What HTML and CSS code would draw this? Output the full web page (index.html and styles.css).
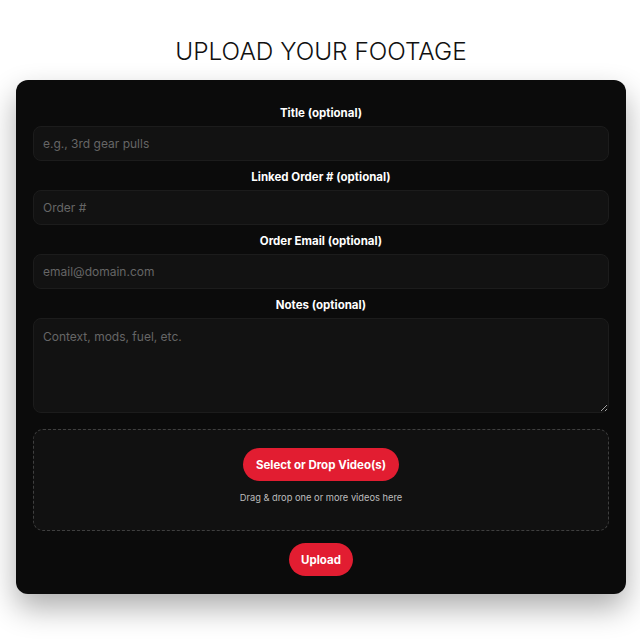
FILE: index.html
```html
<!DOCTYPE html>
<html>
<head>
<meta charset="utf-8">
<link rel="stylesheet" href="styles.css">
</head>
<body>
<main class="page">
  <h1 class="heading">UPLOAD YOUR FOOTAGE</h1>
  <form class="card">
    <div class="field">
      <label class="label">Title (optional)</label>
      <input class="input" type="text" placeholder="e.g., 3rd gear pulls">
    </div>
    <div class="field">
      <label class="label">Linked Order # (optional)</label>
      <input class="input" type="text" placeholder="Order #">
    </div>
    <div class="field">
      <label class="label">Order Email (optional)</label>
      <input class="input" type="text" placeholder="email@domain.com">
    </div>
    <div class="field">
      <label class="label">Notes (optional)</label>
      <textarea class="input textarea" placeholder="Context, mods, fuel, etc."></textarea>
    </div>
    <div class="dropzone">
      <button type="button" class="btn btn-select">Select or Drop Video(s)</button>
      <p class="hint">Drag &amp; drop one or more videos here</p>
    </div>
    <div class="actions">
      <button type="button" class="btn btn-upload">Upload</button>
    </div>
  </form>
</main>
</body>
</html>
```
FILE: styles.css
```css
* { box-sizing: border-box; }
html, body { margin: 0; padding: 0; background: #ffffff; }
body { font-family: Inter, "Noto Sans", sans-serif; }
.page {
  padding: 36px 14px 60px 16px;
  display: flex;
  flex-direction: column;
  align-items: stretch;
}
.heading {
  margin: 0 0 14px;
  text-align: center;
  font-weight: 300;
  font-size: 24.4px;
  line-height: 30px;
  letter-spacing: 0;
  color: #111;
}
.card {
  background: #0b0b0b;
  border-radius: 12px;
  padding: 25px 17px 18px;
  box-shadow: 0 14px 30px rgba(0,0,0,0.32);
  display: flex;
  flex-direction: column;
}
.field {
  display: flex;
  flex-direction: column;
  margin-bottom: 8px;
}
.label {
  text-align: center;
  color: #ffffff;
  font-weight: 700;
  font-size: 11.5px;
  line-height: 16px;
  margin-bottom: 5px;
}
.input {
  height: 35px;
  width: 100%;
  background: #121212;
  border: 1px solid #1c1c1c;
  border-radius: 8px;
  color: #ddd;
  font-family: Inter, sans-serif;
  font-size: 12px;
  padding: 0 9px;
  outline: none;
}
.input::placeholder { color: #666; }
.textarea {
  height: 95px;
  padding: 10px 9px;
  resize: vertical;
  line-height: 16px;
}
.dropzone {
  margin-top: 8px;
  height: 102px;
  border: 1px dashed #3f3f3f;
  border-radius: 10px;
  background: #111111;
  display: flex;
  flex-direction: column;
  align-items: center;
  padding-top: 18px;
}
.btn {
  background: #e21d31;
  color: #fff;
  border: none;
  border-radius: 17px;
  height: 33px;
  font-family: Inter, sans-serif;
  font-weight: 700;
  font-size: 11.5px;
  cursor: pointer;
}
.btn-select { padding: 0 13px; }
.hint {
  margin: 10px 0 0;
  color: #bdbdbd;
  font-size: 9.3px;
  line-height: 13px;
}
.actions {
  margin-top: 12px;
  display: flex;
  justify-content: center;
}
.btn-upload { padding: 0 12px; }
```
